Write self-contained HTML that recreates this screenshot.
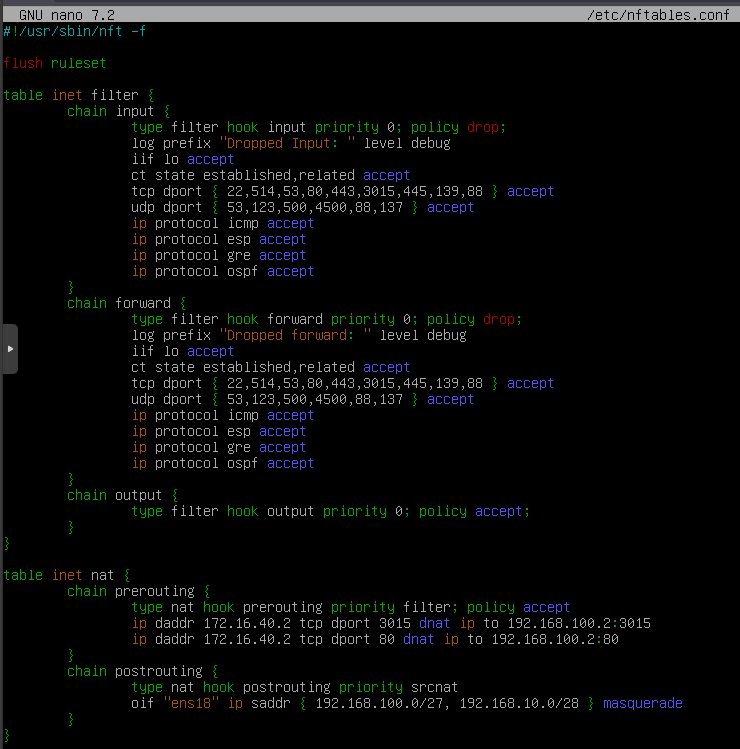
<!DOCTYPE html>
<html><head><meta charset="utf-8"><title>nano nftables.conf</title>
<style>
html,body{margin:0;padding:0;background:#000;width:740px;height:749px;overflow:hidden;font-family:"Liberation Mono",monospace;}
svg{display:block;}
</style></head><body>
<svg width="740" height="749" viewBox="0 0 740 749" shape-rendering="crispEdges">
<defs><path id="g0" d="M4 4h1v1h-1zM4 5h1v1h-1zM4 6h1v1h-1zM4 7h1v1h-1zM4 8h1v1h-1zM4 9h1v1h-1zM4 10h1v1h-1zM4 12h1v1h-1zM4 13h1v1h-1z"/><path id="g1" d="M2 2h1v1h-1zM6 2h1v1h-1zM2 3h1v1h-1zM6 3h1v1h-1zM2 4h1v1h-1zM6 4h1v1h-1zM2 5h1v1h-1zM6 5h1v1h-1z"/><path id="g2" d="M3 4h1v1h-1zM6 4h1v1h-1zM3 5h1v1h-1zM6 5h1v1h-1zM3 6h1v1h-1zM6 6h1v1h-1zM1 7h6v1h-6zM2 8h1v1h-1zM5 8h1v1h-1zM2 9h1v1h-1zM5 9h1v1h-1zM1 10h6v1h-6zM1 11h1v1h-1zM4 11h1v1h-1zM1 12h1v1h-1zM4 12h1v1h-1zM1 13h1v1h-1zM4 13h1v1h-1z"/><path id="g3" d="M3 12h2v1h-2zM4 13h1v1h-1zM4 14h1v1h-1zM3 15h1v1h-1z"/><path id="g4" d="M1 9h6v1h-6z"/><path id="g5" d="M3 12h2v1h-2zM3 13h2v1h-2z"/><path id="g6" d="M6 4h1v1h-1zM6 5h1v1h-1zM5 6h1v1h-1zM4 7h1v1h-1zM4 8h1v1h-1zM3 9h1v1h-1zM3 10h1v1h-1zM2 11h1v1h-1zM1 12h1v1h-1zM1 13h1v1h-1z"/><path id="g7" d="M3 4h2v1h-2zM2 5h1v1h-1zM5 5h1v1h-1zM1 6h1v1h-1zM6 6h1v1h-1zM1 7h1v1h-1zM5 7h2v1h-2zM1 8h1v1h-1zM4 8h1v1h-1zM6 8h1v1h-1zM1 9h1v1h-1zM3 9h1v1h-1zM6 9h1v1h-1zM1 10h2v1h-2zM6 10h1v1h-1zM1 11h1v1h-1zM6 11h1v1h-1zM2 12h1v1h-1zM5 12h1v1h-1zM3 13h2v1h-2z"/><path id="g8" d="M4 4h1v1h-1zM3 5h2v1h-2zM2 6h1v1h-1zM4 6h1v1h-1zM4 7h1v1h-1zM4 8h1v1h-1zM4 9h1v1h-1zM4 10h1v1h-1zM4 11h1v1h-1zM4 12h1v1h-1zM2 13h5v1h-5z"/><path id="g9" d="M2 4h4v1h-4zM1 5h1v1h-1zM6 5h1v1h-1zM1 6h1v1h-1zM6 6h1v1h-1zM6 7h1v1h-1zM4 8h2v1h-2zM3 9h1v1h-1zM2 10h1v1h-1zM1 11h1v1h-1zM1 12h1v1h-1zM1 13h6v1h-6z"/><path id="g10" d="M2 4h4v1h-4zM1 5h1v1h-1zM6 5h1v1h-1zM1 6h1v1h-1zM6 6h1v1h-1zM6 7h1v1h-1zM3 8h3v1h-3zM6 9h1v1h-1zM6 10h1v1h-1zM1 11h1v1h-1zM6 11h1v1h-1zM1 12h1v1h-1zM6 12h1v1h-1zM2 13h4v1h-4z"/><path id="g11" d="M5 4h1v1h-1zM4 5h2v1h-2zM3 6h1v1h-1zM5 6h1v1h-1zM2 7h1v1h-1zM5 7h1v1h-1zM1 8h1v1h-1zM5 8h1v1h-1zM1 9h1v1h-1zM5 9h1v1h-1zM1 10h6v1h-6zM5 11h1v1h-1zM5 12h1v1h-1zM5 13h1v1h-1z"/><path id="g12" d="M1 4h6v1h-6zM1 5h1v1h-1zM1 6h1v1h-1zM1 7h1v1h-1zM1 8h5v1h-5zM6 9h1v1h-1zM6 10h1v1h-1zM6 11h1v1h-1zM1 12h1v1h-1zM6 12h1v1h-1zM2 13h4v1h-4z"/><path id="g13" d="M3 4h3v1h-3zM2 5h1v1h-1zM1 6h1v1h-1zM1 7h1v1h-1zM1 8h5v1h-5zM1 9h1v1h-1zM6 9h1v1h-1zM1 10h1v1h-1zM6 10h1v1h-1zM1 11h1v1h-1zM6 11h1v1h-1zM1 12h1v1h-1zM6 12h1v1h-1zM2 13h4v1h-4z"/><path id="g14" d="M1 4h6v1h-6zM6 5h1v1h-1zM6 6h1v1h-1zM5 7h1v1h-1zM5 8h1v1h-1zM5 9h1v1h-1zM4 10h1v1h-1zM4 11h1v1h-1zM4 12h1v1h-1zM4 13h1v1h-1z"/><path id="g15" d="M2 4h4v1h-4zM1 5h1v1h-1zM6 5h1v1h-1zM1 6h1v1h-1zM6 6h1v1h-1zM1 7h1v1h-1zM6 7h1v1h-1zM2 8h4v1h-4zM1 9h1v1h-1zM6 9h1v1h-1zM1 10h1v1h-1zM6 10h1v1h-1zM1 11h1v1h-1zM6 11h1v1h-1zM1 12h1v1h-1zM6 12h1v1h-1zM2 13h4v1h-4z"/><path id="g16" d="M2 4h4v1h-4zM1 5h1v1h-1zM6 5h1v1h-1zM1 6h1v1h-1zM6 6h1v1h-1zM1 7h1v1h-1zM6 7h1v1h-1zM2 8h5v1h-5zM6 9h1v1h-1zM6 10h1v1h-1zM6 11h1v1h-1zM5 12h1v1h-1zM2 13h3v1h-3z"/><path id="g17" d="M3 6h2v1h-2zM3 7h2v1h-2zM3 11h2v1h-2zM3 12h2v1h-2z"/><path id="g18" d="M3 6h2v1h-2zM3 7h2v1h-2zM3 11h2v1h-2zM4 12h1v1h-1zM4 13h1v1h-1zM3 14h1v1h-1z"/><path id="g19" d="M1 4h4v1h-4zM1 5h1v1h-1zM5 5h1v1h-1zM1 6h1v1h-1zM6 6h1v1h-1zM1 7h1v1h-1zM6 7h1v1h-1zM1 8h1v1h-1zM6 8h1v1h-1zM1 9h1v1h-1zM6 9h1v1h-1zM1 10h1v1h-1zM6 10h1v1h-1zM1 11h1v1h-1zM6 11h1v1h-1zM1 12h1v1h-1zM5 12h1v1h-1zM1 13h4v1h-4z"/><path id="g20" d="M2 4h4v1h-4zM1 5h1v1h-1zM6 5h1v1h-1zM1 6h1v1h-1zM6 6h1v1h-1zM1 7h1v1h-1zM1 8h1v1h-1zM1 9h1v1h-1zM4 9h3v1h-3zM1 10h1v1h-1zM6 10h1v1h-1zM1 11h1v1h-1zM6 11h1v1h-1zM1 12h1v1h-1zM5 12h2v1h-2zM2 13h3v1h-3zM6 13h1v1h-1z"/><path id="g21" d="M2 4h5v1h-5zM4 5h1v1h-1zM4 6h1v1h-1zM4 7h1v1h-1zM4 8h1v1h-1zM4 9h1v1h-1zM4 10h1v1h-1zM4 11h1v1h-1zM4 12h1v1h-1zM2 13h5v1h-5z"/><path id="g22" d="M1 4h1v1h-1zM6 4h1v1h-1zM1 5h2v1h-2zM6 5h1v1h-1zM1 6h2v1h-2zM6 6h1v1h-1zM1 7h1v1h-1zM3 7h1v1h-1zM6 7h1v1h-1zM1 8h1v1h-1zM3 8h1v1h-1zM6 8h1v1h-1zM1 9h1v1h-1zM4 9h1v1h-1zM6 9h1v1h-1zM1 10h1v1h-1zM4 10h1v1h-1zM6 10h1v1h-1zM1 11h1v1h-1zM5 11h2v1h-2zM1 12h1v1h-1zM5 12h2v1h-2zM1 13h1v1h-1zM6 13h1v1h-1z"/><path id="g23" d="M1 4h1v1h-1zM6 4h1v1h-1zM1 5h1v1h-1zM6 5h1v1h-1zM1 6h1v1h-1zM6 6h1v1h-1zM1 7h1v1h-1zM6 7h1v1h-1zM1 8h1v1h-1zM6 8h1v1h-1zM1 9h1v1h-1zM6 9h1v1h-1zM1 10h1v1h-1zM6 10h1v1h-1zM1 11h1v1h-1zM6 11h1v1h-1zM1 12h1v1h-1zM6 12h1v1h-1zM2 13h4v1h-4z"/><path id="g24" d="M2 6h4v1h-4zM1 7h1v1h-1zM6 7h1v1h-1zM6 8h1v1h-1zM2 9h5v1h-5zM1 10h1v1h-1zM6 10h1v1h-1zM1 11h1v1h-1zM6 11h1v1h-1zM1 12h1v1h-1zM5 12h2v1h-2zM2 13h3v1h-3zM6 13h1v1h-1z"/><path id="g25" d="M1 3h1v1h-1zM1 4h1v1h-1zM1 5h1v1h-1zM1 6h1v1h-1zM3 6h3v1h-3zM1 7h2v1h-2zM6 7h1v1h-1zM1 8h1v1h-1zM6 8h1v1h-1zM1 9h1v1h-1zM6 9h1v1h-1zM1 10h1v1h-1zM6 10h1v1h-1zM1 11h1v1h-1zM6 11h1v1h-1zM1 12h2v1h-2zM6 12h1v1h-1zM1 13h1v1h-1zM3 13h3v1h-3z"/><path id="g26" d="M2 6h4v1h-4zM1 7h1v1h-1zM6 7h1v1h-1zM1 8h1v1h-1zM1 9h1v1h-1zM1 10h1v1h-1zM1 11h1v1h-1zM1 12h1v1h-1zM6 12h1v1h-1zM2 13h4v1h-4z"/><path id="g27" d="M6 3h1v1h-1zM6 4h1v1h-1zM6 5h1v1h-1zM2 6h3v1h-3zM6 6h1v1h-1zM1 7h1v1h-1zM5 7h2v1h-2zM1 8h1v1h-1zM6 8h1v1h-1zM1 9h1v1h-1zM6 9h1v1h-1zM1 10h1v1h-1zM6 10h1v1h-1zM1 11h1v1h-1zM6 11h1v1h-1zM1 12h1v1h-1zM5 12h2v1h-2zM2 13h3v1h-3zM6 13h1v1h-1z"/><path id="g28" d="M2 6h4v1h-4zM1 7h1v1h-1zM6 7h1v1h-1zM1 8h1v1h-1zM6 8h1v1h-1zM1 9h6v1h-6zM1 10h1v1h-1zM1 11h1v1h-1zM1 12h1v1h-1zM6 12h1v1h-1zM2 13h4v1h-4z"/><path id="g29" d="M4 3h2v1h-2zM3 4h1v1h-1zM3 5h1v1h-1zM3 6h1v1h-1zM1 7h5v1h-5zM3 8h1v1h-1zM3 9h1v1h-1zM3 10h1v1h-1zM3 11h1v1h-1zM3 12h1v1h-1zM3 13h1v1h-1z"/><path id="g30" d="M6 5h1v1h-1zM2 6h3v1h-3zM6 6h1v1h-1zM1 7h1v1h-1zM5 7h1v1h-1zM1 8h1v1h-1zM5 8h1v1h-1zM1 9h1v1h-1zM5 9h1v1h-1zM2 10h3v1h-3zM2 11h1v1h-1zM2 12h4v1h-4zM1 13h1v1h-1zM6 13h1v1h-1zM1 14h1v1h-1zM6 14h1v1h-1zM2 15h4v1h-4z"/><path id="g31" d="M1 3h1v1h-1zM1 4h1v1h-1zM1 5h1v1h-1zM1 6h1v1h-1zM3 6h3v1h-3zM1 7h2v1h-2zM6 7h1v1h-1zM1 8h1v1h-1zM6 8h1v1h-1zM1 9h1v1h-1zM6 9h1v1h-1zM1 10h1v1h-1zM6 10h1v1h-1zM1 11h1v1h-1zM6 11h1v1h-1zM1 12h1v1h-1zM6 12h1v1h-1zM1 13h1v1h-1zM6 13h1v1h-1z"/><path id="g32" d="M4 3h1v1h-1zM4 4h1v1h-1zM3 6h2v1h-2zM4 7h1v1h-1zM4 8h1v1h-1zM4 9h1v1h-1zM4 10h1v1h-1zM4 11h1v1h-1zM4 12h1v1h-1zM2 13h5v1h-5z"/><path id="g33" d="M1 4h1v1h-1zM1 5h1v1h-1zM1 6h1v1h-1zM5 6h1v1h-1zM1 7h1v1h-1zM4 7h1v1h-1zM1 8h1v1h-1zM3 8h1v1h-1zM1 9h2v1h-2zM1 10h1v1h-1zM3 10h1v1h-1zM1 11h1v1h-1zM4 11h1v1h-1zM1 12h1v1h-1zM5 12h1v1h-1zM1 13h1v1h-1zM6 13h1v1h-1z"/><path id="g34" d="M3 4h2v1h-2zM4 5h1v1h-1zM4 6h1v1h-1zM4 7h1v1h-1zM4 8h1v1h-1zM4 9h1v1h-1zM4 10h1v1h-1zM4 11h1v1h-1zM4 12h1v1h-1zM2 13h5v1h-5z"/><path id="g35" d="M1 6h3v1h-3zM5 6h2v1h-2zM1 7h1v1h-1zM4 7h1v1h-1zM7 7h1v1h-1zM1 8h1v1h-1zM4 8h1v1h-1zM7 8h1v1h-1zM1 9h1v1h-1zM4 9h1v1h-1zM7 9h1v1h-1zM1 10h1v1h-1zM4 10h1v1h-1zM7 10h1v1h-1zM1 11h1v1h-1zM4 11h1v1h-1zM7 11h1v1h-1zM1 12h1v1h-1zM4 12h1v1h-1zM7 12h1v1h-1zM1 13h1v1h-1zM4 13h1v1h-1zM7 13h1v1h-1z"/><path id="g36" d="M1 6h1v1h-1zM3 6h3v1h-3zM1 7h2v1h-2zM6 7h1v1h-1zM1 8h1v1h-1zM6 8h1v1h-1zM1 9h1v1h-1zM6 9h1v1h-1zM1 10h1v1h-1zM6 10h1v1h-1zM1 11h1v1h-1zM6 11h1v1h-1zM1 12h1v1h-1zM6 12h1v1h-1zM1 13h1v1h-1zM6 13h1v1h-1z"/><path id="g37" d="M2 6h4v1h-4zM1 7h1v1h-1zM6 7h1v1h-1zM1 8h1v1h-1zM6 8h1v1h-1zM1 9h1v1h-1zM6 9h1v1h-1zM1 10h1v1h-1zM6 10h1v1h-1zM1 11h1v1h-1zM6 11h1v1h-1zM1 12h1v1h-1zM6 12h1v1h-1zM2 13h4v1h-4z"/><path id="g38" d="M1 6h1v1h-1zM3 6h3v1h-3zM1 7h2v1h-2zM6 7h1v1h-1zM1 8h1v1h-1zM6 8h1v1h-1zM1 9h1v1h-1zM6 9h1v1h-1zM1 10h1v1h-1zM6 10h1v1h-1zM1 11h1v1h-1zM6 11h1v1h-1zM1 12h2v1h-2zM6 12h1v1h-1zM1 13h1v1h-1zM3 13h3v1h-3zM1 14h1v1h-1zM1 15h1v1h-1z"/><path id="g39" d="M2 6h3v1h-3zM6 6h1v1h-1zM1 7h1v1h-1zM5 7h2v1h-2zM1 8h1v1h-1zM6 8h1v1h-1zM1 9h1v1h-1zM6 9h1v1h-1zM1 10h1v1h-1zM6 10h1v1h-1zM1 11h1v1h-1zM6 11h1v1h-1zM1 12h1v1h-1zM5 12h2v1h-2zM2 13h3v1h-3zM6 13h1v1h-1zM6 14h1v1h-1zM6 15h1v1h-1z"/><path id="g40" d="M1 6h1v1h-1zM3 6h3v1h-3zM1 7h2v1h-2zM6 7h1v1h-1zM1 8h1v1h-1zM6 8h1v1h-1zM1 9h1v1h-1zM1 10h1v1h-1zM1 11h1v1h-1zM1 12h1v1h-1zM1 13h1v1h-1z"/><path id="g41" d="M2 6h4v1h-4zM1 7h1v1h-1zM6 7h1v1h-1zM1 8h1v1h-1zM2 9h2v1h-2zM4 10h2v1h-2zM6 11h1v1h-1zM1 12h1v1h-1zM6 12h1v1h-1zM2 13h4v1h-4z"/><path id="g42" d="M3 4h1v1h-1zM3 5h1v1h-1zM1 6h5v1h-5zM3 7h1v1h-1zM3 8h1v1h-1zM3 9h1v1h-1zM3 10h1v1h-1zM3 11h1v1h-1zM3 12h1v1h-1zM4 13h2v1h-2z"/><path id="g43" d="M1 6h1v1h-1zM6 6h1v1h-1zM1 7h1v1h-1zM6 7h1v1h-1zM1 8h1v1h-1zM6 8h1v1h-1zM1 9h1v1h-1zM6 9h1v1h-1zM1 10h1v1h-1zM6 10h1v1h-1zM1 11h1v1h-1zM6 11h1v1h-1zM1 12h1v1h-1zM5 12h2v1h-2zM2 13h3v1h-3zM6 13h1v1h-1z"/><path id="g44" d="M1 6h1v1h-1zM6 6h1v1h-1zM1 7h1v1h-1zM6 7h1v1h-1zM1 8h1v1h-1zM6 8h1v1h-1zM2 9h1v1h-1zM5 9h1v1h-1zM2 10h1v1h-1zM5 10h1v1h-1zM2 11h1v1h-1zM5 11h1v1h-1zM3 12h2v1h-2zM3 13h2v1h-2z"/><path id="g45" d="M1 6h1v1h-1zM7 6h1v1h-1zM1 7h1v1h-1zM4 7h1v1h-1zM7 7h1v1h-1zM1 8h1v1h-1zM4 8h1v1h-1zM7 8h1v1h-1zM1 9h1v1h-1zM4 9h1v1h-1zM7 9h1v1h-1zM1 10h1v1h-1zM4 10h1v1h-1zM7 10h1v1h-1zM1 11h1v1h-1zM4 11h1v1h-1zM7 11h1v1h-1zM1 12h1v1h-1zM4 12h1v1h-1zM7 12h1v1h-1zM2 13h2v1h-2zM5 13h2v1h-2z"/><path id="g46" d="M1 6h1v1h-1zM6 6h1v1h-1zM1 7h1v1h-1zM6 7h1v1h-1zM2 8h1v1h-1zM5 8h1v1h-1zM3 9h2v1h-2zM3 10h2v1h-2zM2 11h1v1h-1zM5 11h1v1h-1zM1 12h1v1h-1zM6 12h1v1h-1zM1 13h1v1h-1zM6 13h1v1h-1z"/><path id="g47" d="M1 6h1v1h-1zM6 6h1v1h-1zM1 7h1v1h-1zM6 7h1v1h-1zM1 8h1v1h-1zM6 8h1v1h-1zM1 9h1v1h-1zM6 9h1v1h-1zM1 10h1v1h-1zM6 10h1v1h-1zM2 11h1v1h-1zM5 11h2v1h-2zM3 12h2v1h-2zM6 12h1v1h-1zM6 13h1v1h-1zM6 14h1v1h-1zM2 15h4v1h-4z"/><path id="g48" d="M4 3h2v1h-2zM3 4h1v1h-1zM3 5h1v1h-1zM4 6h1v1h-1zM4 7h1v1h-1zM3 8h1v1h-1zM2 9h1v1h-1zM3 10h1v1h-1zM4 11h1v1h-1zM4 12h1v1h-1zM3 13h1v1h-1zM3 14h1v1h-1zM4 15h2v1h-2z"/><path id="g49" d="M2 3h2v1h-2zM4 4h1v1h-1zM4 5h1v1h-1zM3 6h1v1h-1zM3 7h1v1h-1zM4 8h1v1h-1zM5 9h1v1h-1zM4 10h1v1h-1zM3 11h1v1h-1zM3 12h1v1h-1zM4 13h1v1h-1zM4 14h1v1h-1zM2 15h2v1h-2z"/></defs>
<rect x="0" y="0" width="740" height="749" fill="#000"/>
<rect x="0" y="0" width="3" height="749" fill="#3a3a3a"/>
<rect x="2" y="0" width="1" height="749" fill="#303030"/>
<rect x="3" y="0" width="737" height="6" fill="#474752"/>
<path d="M54 0H740V2H57Q54 2 54 0Z" fill="#35353f" shape-rendering="geometricPrecision"/>
<rect x="3" y="5" width="737" height="1" fill="#45454f"/>
<rect x="3" y="6" width="737" height="16" fill="#aaaaaa"/>
<rect x="3" y="6" width="737" height="1" fill="#a0a0a2"/>
<g fill="#000000"><use href="#g20" x="19" y="6"/><use href="#g22" x="27" y="6"/><use href="#g23" x="35" y="6"/><use href="#g36" x="51" y="6"/><use href="#g24" x="59" y="6"/><use href="#g36" x="67" y="6"/><use href="#g37" x="75" y="6"/><use href="#g14" x="91" y="6"/><use href="#g5" x="99" y="6"/><use href="#g9" x="107" y="6"/><use href="#g6" x="587" y="6"/><use href="#g28" x="595" y="6"/><use href="#g42" x="603" y="6"/><use href="#g26" x="611" y="6"/><use href="#g6" x="619" y="6"/><use href="#g36" x="627" y="6"/><use href="#g29" x="635" y="6"/><use href="#g42" x="643" y="6"/><use href="#g24" x="651" y="6"/><use href="#g25" x="659" y="6"/><use href="#g34" x="667" y="6"/><use href="#g28" x="675" y="6"/><use href="#g41" x="683" y="6"/><use href="#g5" x="691" y="6"/><use href="#g26" x="699" y="6"/><use href="#g37" x="707" y="6"/><use href="#g36" x="715" y="6"/><use href="#g29" x="723" y="6"/></g>
<g fill="#00aaaa"><use href="#g2" x="3" y="22"/><use href="#g6" x="19" y="22"/><use href="#g43" x="27" y="22"/><use href="#g41" x="35" y="22"/><use href="#g40" x="43" y="22"/><use href="#g6" x="51" y="22"/><use href="#g41" x="59" y="22"/><use href="#g25" x="67" y="22"/><use href="#g32" x="75" y="22"/><use href="#g36" x="83" y="22"/><use href="#g6" x="91" y="22"/><use href="#g36" x="99" y="22"/><use href="#g29" x="107" y="22"/><use href="#g42" x="115" y="22"/><use href="#g4" x="131" y="22"/><use href="#g29" x="139" y="22"/></g>
<g fill="#00aa00"><use href="#g0" x="11" y="22"/><use href="#g40" x="51" y="54"/><use href="#g43" x="59" y="54"/><use href="#g34" x="67" y="54"/><use href="#g28" x="75" y="54"/><use href="#g41" x="83" y="54"/><use href="#g28" x="91" y="54"/><use href="#g42" x="99" y="54"/><use href="#g42" x="3" y="86"/><use href="#g24" x="11" y="86"/><use href="#g25" x="19" y="86"/><use href="#g34" x="27" y="86"/><use href="#g28" x="35" y="86"/><use href="#g48" x="147" y="86"/><use href="#g26" x="67" y="102"/><use href="#g31" x="75" y="102"/><use href="#g24" x="83" y="102"/><use href="#g32" x="91" y="102"/><use href="#g36" x="99" y="102"/><use href="#g48" x="163" y="102"/><use href="#g42" x="131" y="118"/><use href="#g47" x="139" y="118"/><use href="#g38" x="147" y="118"/><use href="#g28" x="155" y="118"/><use href="#g31" x="227" y="118"/><use href="#g37" x="235" y="118"/><use href="#g37" x="243" y="118"/><use href="#g33" x="251" y="118"/><use href="#g38" x="315" y="118"/><use href="#g40" x="323" y="118"/><use href="#g32" x="331" y="118"/><use href="#g37" x="339" y="118"/><use href="#g40" x="347" y="118"/><use href="#g32" x="355" y="118"/><use href="#g42" x="363" y="118"/><use href="#g47" x="371" y="118"/><use href="#g18" x="395" y="118"/><use href="#g38" x="411" y="118"/><use href="#g37" x="419" y="118"/><use href="#g34" x="427" y="118"/><use href="#g32" x="435" y="118"/><use href="#g26" x="443" y="118"/><use href="#g47" x="451" y="118"/><use href="#g18" x="499" y="118"/><use href="#g17" x="331" y="134"/><use href="#g48" x="211" y="182"/><use href="#g49" x="491" y="182"/><use href="#g48" x="211" y="198"/><use href="#g49" x="411" y="198"/><use href="#g49" x="67" y="278"/><use href="#g26" x="67" y="294"/><use href="#g31" x="75" y="294"/><use href="#g24" x="83" y="294"/><use href="#g32" x="91" y="294"/><use href="#g36" x="99" y="294"/><use href="#g48" x="179" y="294"/><use href="#g42" x="131" y="310"/><use href="#g47" x="139" y="310"/><use href="#g38" x="147" y="310"/><use href="#g28" x="155" y="310"/><use href="#g31" x="227" y="310"/><use href="#g37" x="235" y="310"/><use href="#g37" x="243" y="310"/><use href="#g33" x="251" y="310"/><use href="#g38" x="331" y="310"/><use href="#g40" x="339" y="310"/><use href="#g32" x="347" y="310"/><use href="#g37" x="355" y="310"/><use href="#g40" x="363" y="310"/><use href="#g32" x="371" y="310"/><use href="#g42" x="379" y="310"/><use href="#g47" x="387" y="310"/><use href="#g18" x="411" y="310"/><use href="#g38" x="427" y="310"/><use href="#g37" x="435" y="310"/><use href="#g34" x="443" y="310"/><use href="#g32" x="451" y="310"/><use href="#g26" x="459" y="310"/><use href="#g47" x="467" y="310"/><use href="#g18" x="515" y="310"/><use href="#g17" x="347" y="326"/><use href="#g48" x="211" y="374"/><use href="#g49" x="491" y="374"/><use href="#g48" x="211" y="390"/><use href="#g49" x="411" y="390"/><use href="#g49" x="67" y="470"/><use href="#g26" x="67" y="486"/><use href="#g31" x="75" y="486"/><use href="#g24" x="83" y="486"/><use href="#g32" x="91" y="486"/><use href="#g36" x="99" y="486"/><use href="#g48" x="171" y="486"/><use href="#g42" x="131" y="502"/><use href="#g47" x="139" y="502"/><use href="#g38" x="147" y="502"/><use href="#g28" x="155" y="502"/><use href="#g31" x="227" y="502"/><use href="#g37" x="235" y="502"/><use href="#g37" x="243" y="502"/><use href="#g33" x="251" y="502"/><use href="#g38" x="323" y="502"/><use href="#g40" x="331" y="502"/><use href="#g32" x="339" y="502"/><use href="#g37" x="347" y="502"/><use href="#g40" x="355" y="502"/><use href="#g32" x="363" y="502"/><use href="#g42" x="371" y="502"/><use href="#g47" x="379" y="502"/><use href="#g18" x="403" y="502"/><use href="#g38" x="419" y="502"/><use href="#g37" x="427" y="502"/><use href="#g34" x="435" y="502"/><use href="#g32" x="443" y="502"/><use href="#g26" x="451" y="502"/><use href="#g47" x="459" y="502"/><use href="#g18" x="523" y="502"/><use href="#g49" x="67" y="518"/><use href="#g49" x="3" y="534"/><use href="#g42" x="3" y="566"/><use href="#g24" x="11" y="566"/><use href="#g25" x="19" y="566"/><use href="#g34" x="27" y="566"/><use href="#g28" x="35" y="566"/><use href="#g48" x="123" y="566"/><use href="#g26" x="67" y="582"/><use href="#g31" x="75" y="582"/><use href="#g24" x="83" y="582"/><use href="#g32" x="91" y="582"/><use href="#g36" x="99" y="582"/><use href="#g48" x="203" y="582"/><use href="#g42" x="131" y="598"/><use href="#g47" x="139" y="598"/><use href="#g38" x="147" y="598"/><use href="#g28" x="155" y="598"/><use href="#g31" x="203" y="598"/><use href="#g37" x="211" y="598"/><use href="#g37" x="219" y="598"/><use href="#g33" x="227" y="598"/><use href="#g38" x="331" y="598"/><use href="#g40" x="339" y="598"/><use href="#g32" x="347" y="598"/><use href="#g37" x="355" y="598"/><use href="#g40" x="363" y="598"/><use href="#g32" x="371" y="598"/><use href="#g42" x="379" y="598"/><use href="#g47" x="387" y="598"/><use href="#g18" x="451" y="598"/><use href="#g38" x="467" y="598"/><use href="#g37" x="475" y="598"/><use href="#g34" x="483" y="598"/><use href="#g32" x="491" y="598"/><use href="#g26" x="499" y="598"/><use href="#g47" x="507" y="598"/><use href="#g17" x="611" y="614"/><use href="#g17" x="595" y="630"/><use href="#g49" x="67" y="646"/><use href="#g26" x="67" y="662"/><use href="#g31" x="75" y="662"/><use href="#g24" x="83" y="662"/><use href="#g32" x="91" y="662"/><use href="#g36" x="99" y="662"/><use href="#g48" x="211" y="662"/><use href="#g42" x="131" y="678"/><use href="#g47" x="139" y="678"/><use href="#g38" x="147" y="678"/><use href="#g28" x="155" y="678"/><use href="#g31" x="203" y="678"/><use href="#g37" x="211" y="678"/><use href="#g37" x="219" y="678"/><use href="#g33" x="227" y="678"/><use href="#g38" x="339" y="678"/><use href="#g40" x="347" y="678"/><use href="#g32" x="355" y="678"/><use href="#g37" x="363" y="678"/><use href="#g40" x="371" y="678"/><use href="#g32" x="379" y="678"/><use href="#g42" x="387" y="678"/><use href="#g47" x="395" y="678"/><use href="#g48" x="299" y="694"/><use href="#g49" x="587" y="694"/><use href="#g49" x="67" y="710"/><use href="#g49" x="3" y="726"/></g>
<g fill="#aa0000"><use href="#g29" x="3" y="54"/><use href="#g34" x="11" y="54"/><use href="#g43" x="19" y="54"/><use href="#g41" x="27" y="54"/><use href="#g31" x="35" y="54"/><use href="#g27" x="467" y="118"/><use href="#g40" x="475" y="118"/><use href="#g37" x="483" y="118"/><use href="#g38" x="491" y="118"/><use href="#g27" x="483" y="310"/><use href="#g40" x="491" y="310"/><use href="#g37" x="499" y="310"/><use href="#g38" x="507" y="310"/></g>
<g fill="#aa5500"><use href="#g32" x="51" y="86"/><use href="#g36" x="59" y="86"/><use href="#g28" x="67" y="86"/><use href="#g42" x="75" y="86"/><use href="#g1" x="219" y="134"/><use href="#g19" x="227" y="134"/><use href="#g40" x="235" y="134"/><use href="#g37" x="243" y="134"/><use href="#g38" x="251" y="134"/><use href="#g38" x="259" y="134"/><use href="#g28" x="267" y="134"/><use href="#g27" x="275" y="134"/><use href="#g21" x="291" y="134"/><use href="#g36" x="299" y="134"/><use href="#g38" x="307" y="134"/><use href="#g43" x="315" y="134"/><use href="#g42" x="323" y="134"/><use href="#g1" x="347" y="134"/><use href="#g32" x="131" y="214"/><use href="#g38" x="139" y="214"/><use href="#g32" x="131" y="230"/><use href="#g38" x="139" y="230"/><use href="#g32" x="131" y="246"/><use href="#g38" x="139" y="246"/><use href="#g32" x="131" y="262"/><use href="#g38" x="139" y="262"/><use href="#g1" x="219" y="326"/><use href="#g19" x="227" y="326"/><use href="#g40" x="235" y="326"/><use href="#g37" x="243" y="326"/><use href="#g38" x="251" y="326"/><use href="#g38" x="259" y="326"/><use href="#g28" x="267" y="326"/><use href="#g27" x="275" y="326"/><use href="#g29" x="291" y="326"/><use href="#g37" x="299" y="326"/><use href="#g40" x="307" y="326"/><use href="#g45" x="315" y="326"/><use href="#g24" x="323" y="326"/><use href="#g40" x="331" y="326"/><use href="#g27" x="339" y="326"/><use href="#g1" x="363" y="326"/><use href="#g32" x="131" y="406"/><use href="#g38" x="139" y="406"/><use href="#g32" x="131" y="422"/><use href="#g38" x="139" y="422"/><use href="#g32" x="131" y="438"/><use href="#g38" x="139" y="438"/><use href="#g32" x="131" y="454"/><use href="#g38" x="139" y="454"/><use href="#g32" x="51" y="566"/><use href="#g36" x="59" y="566"/><use href="#g28" x="67" y="566"/><use href="#g42" x="75" y="566"/><use href="#g32" x="131" y="614"/><use href="#g38" x="139" y="614"/><use href="#g32" x="459" y="614"/><use href="#g38" x="467" y="614"/><use href="#g32" x="131" y="630"/><use href="#g38" x="139" y="630"/><use href="#g32" x="443" y="630"/><use href="#g38" x="451" y="630"/><use href="#g1" x="163" y="694"/><use href="#g28" x="171" y="694"/><use href="#g36" x="179" y="694"/><use href="#g41" x="187" y="694"/><use href="#g8" x="195" y="694"/><use href="#g15" x="203" y="694"/><use href="#g1" x="211" y="694"/><use href="#g32" x="227" y="694"/><use href="#g38" x="235" y="694"/></g>
<g fill="#aaaaaa"><use href="#g29" x="91" y="86"/><use href="#g32" x="99" y="86"/><use href="#g34" x="107" y="86"/><use href="#g42" x="115" y="86"/><use href="#g28" x="123" y="86"/><use href="#g40" x="131" y="86"/><use href="#g32" x="115" y="102"/><use href="#g36" x="123" y="102"/><use href="#g38" x="131" y="102"/><use href="#g43" x="139" y="102"/><use href="#g42" x="147" y="102"/><use href="#g29" x="171" y="118"/><use href="#g32" x="179" y="118"/><use href="#g34" x="187" y="118"/><use href="#g42" x="195" y="118"/><use href="#g28" x="203" y="118"/><use href="#g40" x="211" y="118"/><use href="#g32" x="267" y="118"/><use href="#g36" x="275" y="118"/><use href="#g38" x="283" y="118"/><use href="#g43" x="291" y="118"/><use href="#g42" x="299" y="118"/><use href="#g7" x="387" y="118"/><use href="#g34" x="131" y="134"/><use href="#g37" x="139" y="134"/><use href="#g30" x="147" y="134"/><use href="#g38" x="163" y="134"/><use href="#g40" x="171" y="134"/><use href="#g28" x="179" y="134"/><use href="#g29" x="187" y="134"/><use href="#g32" x="195" y="134"/><use href="#g46" x="203" y="134"/><use href="#g34" x="363" y="134"/><use href="#g28" x="371" y="134"/><use href="#g44" x="379" y="134"/><use href="#g28" x="387" y="134"/><use href="#g34" x="395" y="134"/><use href="#g27" x="411" y="134"/><use href="#g28" x="419" y="134"/><use href="#g25" x="427" y="134"/><use href="#g43" x="435" y="134"/><use href="#g30" x="443" y="134"/><use href="#g32" x="131" y="150"/><use href="#g32" x="139" y="150"/><use href="#g29" x="147" y="150"/><use href="#g34" x="163" y="150"/><use href="#g37" x="171" y="150"/><use href="#g26" x="131" y="166"/><use href="#g42" x="139" y="166"/><use href="#g41" x="155" y="166"/><use href="#g42" x="163" y="166"/><use href="#g24" x="171" y="166"/><use href="#g42" x="179" y="166"/><use href="#g28" x="187" y="166"/><use href="#g28" x="203" y="166"/><use href="#g41" x="211" y="166"/><use href="#g42" x="219" y="166"/><use href="#g24" x="227" y="166"/><use href="#g25" x="235" y="166"/><use href="#g34" x="243" y="166"/><use href="#g32" x="251" y="166"/><use href="#g41" x="259" y="166"/><use href="#g31" x="267" y="166"/><use href="#g28" x="275" y="166"/><use href="#g27" x="283" y="166"/><use href="#g3" x="291" y="166"/><use href="#g40" x="299" y="166"/><use href="#g28" x="307" y="166"/><use href="#g34" x="315" y="166"/><use href="#g24" x="323" y="166"/><use href="#g42" x="331" y="166"/><use href="#g28" x="339" y="166"/><use href="#g27" x="347" y="166"/><use href="#g42" x="131" y="182"/><use href="#g26" x="139" y="182"/><use href="#g38" x="147" y="182"/><use href="#g27" x="163" y="182"/><use href="#g38" x="171" y="182"/><use href="#g37" x="179" y="182"/><use href="#g40" x="187" y="182"/><use href="#g42" x="195" y="182"/><use href="#g9" x="227" y="182"/><use href="#g9" x="235" y="182"/><use href="#g3" x="243" y="182"/><use href="#g12" x="251" y="182"/><use href="#g8" x="259" y="182"/><use href="#g11" x="267" y="182"/><use href="#g3" x="275" y="182"/><use href="#g12" x="283" y="182"/><use href="#g10" x="291" y="182"/><use href="#g3" x="299" y="182"/><use href="#g15" x="307" y="182"/><use href="#g7" x="315" y="182"/><use href="#g3" x="323" y="182"/><use href="#g11" x="331" y="182"/><use href="#g11" x="339" y="182"/><use href="#g10" x="347" y="182"/><use href="#g3" x="355" y="182"/><use href="#g10" x="363" y="182"/><use href="#g7" x="371" y="182"/><use href="#g8" x="379" y="182"/><use href="#g12" x="387" y="182"/><use href="#g3" x="395" y="182"/><use href="#g11" x="403" y="182"/><use href="#g11" x="411" y="182"/><use href="#g12" x="419" y="182"/><use href="#g3" x="427" y="182"/><use href="#g8" x="435" y="182"/><use href="#g10" x="443" y="182"/><use href="#g16" x="451" y="182"/><use href="#g3" x="459" y="182"/><use href="#g15" x="467" y="182"/><use href="#g15" x="475" y="182"/><use href="#g43" x="131" y="198"/><use href="#g27" x="139" y="198"/><use href="#g38" x="147" y="198"/><use href="#g27" x="163" y="198"/><use href="#g38" x="171" y="198"/><use href="#g37" x="179" y="198"/><use href="#g40" x="187" y="198"/><use href="#g42" x="195" y="198"/><use href="#g12" x="227" y="198"/><use href="#g10" x="235" y="198"/><use href="#g3" x="243" y="198"/><use href="#g8" x="251" y="198"/><use href="#g9" x="259" y="198"/><use href="#g10" x="267" y="198"/><use href="#g3" x="275" y="198"/><use href="#g12" x="283" y="198"/><use href="#g7" x="291" y="198"/><use href="#g7" x="299" y="198"/><use href="#g3" x="307" y="198"/><use href="#g11" x="315" y="198"/><use href="#g12" x="323" y="198"/><use href="#g7" x="331" y="198"/><use href="#g7" x="339" y="198"/><use href="#g3" x="347" y="198"/><use href="#g15" x="355" y="198"/><use href="#g15" x="363" y="198"/><use href="#g3" x="371" y="198"/><use href="#g8" x="379" y="198"/><use href="#g10" x="387" y="198"/><use href="#g14" x="395" y="198"/><use href="#g38" x="155" y="214"/><use href="#g40" x="163" y="214"/><use href="#g37" x="171" y="214"/><use href="#g42" x="179" y="214"/><use href="#g37" x="187" y="214"/><use href="#g26" x="195" y="214"/><use href="#g37" x="203" y="214"/><use href="#g34" x="211" y="214"/><use href="#g32" x="227" y="214"/><use href="#g26" x="235" y="214"/><use href="#g35" x="243" y="214"/><use href="#g38" x="251" y="214"/><use href="#g38" x="155" y="230"/><use href="#g40" x="163" y="230"/><use href="#g37" x="171" y="230"/><use href="#g42" x="179" y="230"/><use href="#g37" x="187" y="230"/><use href="#g26" x="195" y="230"/><use href="#g37" x="203" y="230"/><use href="#g34" x="211" y="230"/><use href="#g28" x="227" y="230"/><use href="#g41" x="235" y="230"/><use href="#g38" x="243" y="230"/><use href="#g38" x="155" y="246"/><use href="#g40" x="163" y="246"/><use href="#g37" x="171" y="246"/><use href="#g42" x="179" y="246"/><use href="#g37" x="187" y="246"/><use href="#g26" x="195" y="246"/><use href="#g37" x="203" y="246"/><use href="#g34" x="211" y="246"/><use href="#g30" x="227" y="246"/><use href="#g40" x="235" y="246"/><use href="#g28" x="243" y="246"/><use href="#g38" x="155" y="262"/><use href="#g40" x="163" y="262"/><use href="#g37" x="171" y="262"/><use href="#g42" x="179" y="262"/><use href="#g37" x="187" y="262"/><use href="#g26" x="195" y="262"/><use href="#g37" x="203" y="262"/><use href="#g34" x="211" y="262"/><use href="#g37" x="227" y="262"/><use href="#g41" x="235" y="262"/><use href="#g38" x="243" y="262"/><use href="#g29" x="251" y="262"/><use href="#g29" x="115" y="294"/><use href="#g37" x="123" y="294"/><use href="#g40" x="131" y="294"/><use href="#g45" x="139" y="294"/><use href="#g24" x="147" y="294"/><use href="#g40" x="155" y="294"/><use href="#g27" x="163" y="294"/><use href="#g29" x="171" y="310"/><use href="#g32" x="179" y="310"/><use href="#g34" x="187" y="310"/><use href="#g42" x="195" y="310"/><use href="#g28" x="203" y="310"/><use href="#g40" x="211" y="310"/><use href="#g29" x="267" y="310"/><use href="#g37" x="275" y="310"/><use href="#g40" x="283" y="310"/><use href="#g45" x="291" y="310"/><use href="#g24" x="299" y="310"/><use href="#g40" x="307" y="310"/><use href="#g27" x="315" y="310"/><use href="#g7" x="403" y="310"/><use href="#g34" x="131" y="326"/><use href="#g37" x="139" y="326"/><use href="#g30" x="147" y="326"/><use href="#g38" x="163" y="326"/><use href="#g40" x="171" y="326"/><use href="#g28" x="179" y="326"/><use href="#g29" x="187" y="326"/><use href="#g32" x="195" y="326"/><use href="#g46" x="203" y="326"/><use href="#g34" x="379" y="326"/><use href="#g28" x="387" y="326"/><use href="#g44" x="395" y="326"/><use href="#g28" x="403" y="326"/><use href="#g34" x="411" y="326"/><use href="#g27" x="427" y="326"/><use href="#g28" x="435" y="326"/><use href="#g25" x="443" y="326"/><use href="#g43" x="451" y="326"/><use href="#g30" x="459" y="326"/><use href="#g32" x="131" y="342"/><use href="#g32" x="139" y="342"/><use href="#g29" x="147" y="342"/><use href="#g34" x="163" y="342"/><use href="#g37" x="171" y="342"/><use href="#g26" x="131" y="358"/><use href="#g42" x="139" y="358"/><use href="#g41" x="155" y="358"/><use href="#g42" x="163" y="358"/><use href="#g24" x="171" y="358"/><use href="#g42" x="179" y="358"/><use href="#g28" x="187" y="358"/><use href="#g28" x="203" y="358"/><use href="#g41" x="211" y="358"/><use href="#g42" x="219" y="358"/><use href="#g24" x="227" y="358"/><use href="#g25" x="235" y="358"/><use href="#g34" x="243" y="358"/><use href="#g32" x="251" y="358"/><use href="#g41" x="259" y="358"/><use href="#g31" x="267" y="358"/><use href="#g28" x="275" y="358"/><use href="#g27" x="283" y="358"/><use href="#g3" x="291" y="358"/><use href="#g40" x="299" y="358"/><use href="#g28" x="307" y="358"/><use href="#g34" x="315" y="358"/><use href="#g24" x="323" y="358"/><use href="#g42" x="331" y="358"/><use href="#g28" x="339" y="358"/><use href="#g27" x="347" y="358"/><use href="#g42" x="131" y="374"/><use href="#g26" x="139" y="374"/><use href="#g38" x="147" y="374"/><use href="#g27" x="163" y="374"/><use href="#g38" x="171" y="374"/><use href="#g37" x="179" y="374"/><use href="#g40" x="187" y="374"/><use href="#g42" x="195" y="374"/><use href="#g9" x="227" y="374"/><use href="#g9" x="235" y="374"/><use href="#g3" x="243" y="374"/><use href="#g12" x="251" y="374"/><use href="#g8" x="259" y="374"/><use href="#g11" x="267" y="374"/><use href="#g3" x="275" y="374"/><use href="#g12" x="283" y="374"/><use href="#g10" x="291" y="374"/><use href="#g3" x="299" y="374"/><use href="#g15" x="307" y="374"/><use href="#g7" x="315" y="374"/><use href="#g3" x="323" y="374"/><use href="#g11" x="331" y="374"/><use href="#g11" x="339" y="374"/><use href="#g10" x="347" y="374"/><use href="#g3" x="355" y="374"/><use href="#g10" x="363" y="374"/><use href="#g7" x="371" y="374"/><use href="#g8" x="379" y="374"/><use href="#g12" x="387" y="374"/><use href="#g3" x="395" y="374"/><use href="#g11" x="403" y="374"/><use href="#g11" x="411" y="374"/><use href="#g12" x="419" y="374"/><use href="#g3" x="427" y="374"/><use href="#g8" x="435" y="374"/><use href="#g10" x="443" y="374"/><use href="#g16" x="451" y="374"/><use href="#g3" x="459" y="374"/><use href="#g15" x="467" y="374"/><use href="#g15" x="475" y="374"/><use href="#g43" x="131" y="390"/><use href="#g27" x="139" y="390"/><use href="#g38" x="147" y="390"/><use href="#g27" x="163" y="390"/><use href="#g38" x="171" y="390"/><use href="#g37" x="179" y="390"/><use href="#g40" x="187" y="390"/><use href="#g42" x="195" y="390"/><use href="#g12" x="227" y="390"/><use href="#g10" x="235" y="390"/><use href="#g3" x="243" y="390"/><use href="#g8" x="251" y="390"/><use href="#g9" x="259" y="390"/><use href="#g10" x="267" y="390"/><use href="#g3" x="275" y="390"/><use href="#g12" x="283" y="390"/><use href="#g7" x="291" y="390"/><use href="#g7" x="299" y="390"/><use href="#g3" x="307" y="390"/><use href="#g11" x="315" y="390"/><use href="#g12" x="323" y="390"/><use href="#g7" x="331" y="390"/><use href="#g7" x="339" y="390"/><use href="#g3" x="347" y="390"/><use href="#g15" x="355" y="390"/><use href="#g15" x="363" y="390"/><use href="#g3" x="371" y="390"/><use href="#g8" x="379" y="390"/><use href="#g10" x="387" y="390"/><use href="#g14" x="395" y="390"/><use href="#g38" x="155" y="406"/><use href="#g40" x="163" y="406"/><use href="#g37" x="171" y="406"/><use href="#g42" x="179" y="406"/><use href="#g37" x="187" y="406"/><use href="#g26" x="195" y="406"/><use href="#g37" x="203" y="406"/><use href="#g34" x="211" y="406"/><use href="#g32" x="227" y="406"/><use href="#g26" x="235" y="406"/><use href="#g35" x="243" y="406"/><use href="#g38" x="251" y="406"/><use href="#g38" x="155" y="422"/><use href="#g40" x="163" y="422"/><use href="#g37" x="171" y="422"/><use href="#g42" x="179" y="422"/><use href="#g37" x="187" y="422"/><use href="#g26" x="195" y="422"/><use href="#g37" x="203" y="422"/><use href="#g34" x="211" y="422"/><use href="#g28" x="227" y="422"/><use href="#g41" x="235" y="422"/><use href="#g38" x="243" y="422"/><use href="#g38" x="155" y="438"/><use href="#g40" x="163" y="438"/><use href="#g37" x="171" y="438"/><use href="#g42" x="179" y="438"/><use href="#g37" x="187" y="438"/><use href="#g26" x="195" y="438"/><use href="#g37" x="203" y="438"/><use href="#g34" x="211" y="438"/><use href="#g30" x="227" y="438"/><use href="#g40" x="235" y="438"/><use href="#g28" x="243" y="438"/><use href="#g38" x="155" y="454"/><use href="#g40" x="163" y="454"/><use href="#g37" x="171" y="454"/><use href="#g42" x="179" y="454"/><use href="#g37" x="187" y="454"/><use href="#g26" x="195" y="454"/><use href="#g37" x="203" y="454"/><use href="#g34" x="211" y="454"/><use href="#g37" x="227" y="454"/><use href="#g41" x="235" y="454"/><use href="#g38" x="243" y="454"/><use href="#g29" x="251" y="454"/><use href="#g37" x="115" y="486"/><use href="#g43" x="123" y="486"/><use href="#g42" x="131" y="486"/><use href="#g38" x="139" y="486"/><use href="#g43" x="147" y="486"/><use href="#g42" x="155" y="486"/><use href="#g29" x="171" y="502"/><use href="#g32" x="179" y="502"/><use href="#g34" x="187" y="502"/><use href="#g42" x="195" y="502"/><use href="#g28" x="203" y="502"/><use href="#g40" x="211" y="502"/><use href="#g37" x="267" y="502"/><use href="#g43" x="275" y="502"/><use href="#g42" x="283" y="502"/><use href="#g38" x="291" y="502"/><use href="#g43" x="299" y="502"/><use href="#g42" x="307" y="502"/><use href="#g7" x="395" y="502"/><use href="#g36" x="91" y="566"/><use href="#g24" x="99" y="566"/><use href="#g42" x="107" y="566"/><use href="#g38" x="115" y="582"/><use href="#g40" x="123" y="582"/><use href="#g28" x="131" y="582"/><use href="#g40" x="139" y="582"/><use href="#g37" x="147" y="582"/><use href="#g43" x="155" y="582"/><use href="#g42" x="163" y="582"/><use href="#g32" x="171" y="582"/><use href="#g36" x="179" y="582"/><use href="#g30" x="187" y="582"/><use href="#g36" x="171" y="598"/><use href="#g24" x="179" y="598"/><use href="#g42" x="187" y="598"/><use href="#g38" x="243" y="598"/><use href="#g40" x="251" y="598"/><use href="#g28" x="259" y="598"/><use href="#g40" x="267" y="598"/><use href="#g37" x="275" y="598"/><use href="#g43" x="283" y="598"/><use href="#g42" x="291" y="598"/><use href="#g32" x="299" y="598"/><use href="#g36" x="307" y="598"/><use href="#g30" x="315" y="598"/><use href="#g29" x="403" y="598"/><use href="#g32" x="411" y="598"/><use href="#g34" x="419" y="598"/><use href="#g42" x="427" y="598"/><use href="#g28" x="435" y="598"/><use href="#g40" x="443" y="598"/><use href="#g27" x="155" y="614"/><use href="#g24" x="163" y="614"/><use href="#g27" x="171" y="614"/><use href="#g27" x="179" y="614"/><use href="#g40" x="187" y="614"/><use href="#g8" x="203" y="614"/><use href="#g14" x="211" y="614"/><use href="#g9" x="219" y="614"/><use href="#g5" x="227" y="614"/><use href="#g8" x="235" y="614"/><use href="#g13" x="243" y="614"/><use href="#g5" x="251" y="614"/><use href="#g11" x="259" y="614"/><use href="#g7" x="267" y="614"/><use href="#g5" x="275" y="614"/><use href="#g9" x="283" y="614"/><use href="#g42" x="299" y="614"/><use href="#g26" x="307" y="614"/><use href="#g38" x="315" y="614"/><use href="#g27" x="331" y="614"/><use href="#g38" x="339" y="614"/><use href="#g37" x="347" y="614"/><use href="#g40" x="355" y="614"/><use href="#g42" x="363" y="614"/><use href="#g10" x="379" y="614"/><use href="#g7" x="387" y="614"/><use href="#g8" x="395" y="614"/><use href="#g12" x="403" y="614"/><use href="#g42" x="483" y="614"/><use href="#g37" x="491" y="614"/><use href="#g8" x="507" y="614"/><use href="#g16" x="515" y="614"/><use href="#g9" x="523" y="614"/><use href="#g5" x="531" y="614"/><use href="#g8" x="539" y="614"/><use href="#g13" x="547" y="614"/><use href="#g15" x="555" y="614"/><use href="#g5" x="563" y="614"/><use href="#g8" x="571" y="614"/><use href="#g7" x="579" y="614"/><use href="#g7" x="587" y="614"/><use href="#g5" x="595" y="614"/><use href="#g9" x="603" y="614"/><use href="#g10" x="619" y="614"/><use href="#g7" x="627" y="614"/><use href="#g8" x="635" y="614"/><use href="#g12" x="643" y="614"/><use href="#g27" x="155" y="630"/><use href="#g24" x="163" y="630"/><use href="#g27" x="171" y="630"/><use href="#g27" x="179" y="630"/><use href="#g40" x="187" y="630"/><use href="#g8" x="203" y="630"/><use href="#g14" x="211" y="630"/><use href="#g9" x="219" y="630"/><use href="#g5" x="227" y="630"/><use href="#g8" x="235" y="630"/><use href="#g13" x="243" y="630"/><use href="#g5" x="251" y="630"/><use href="#g11" x="259" y="630"/><use href="#g7" x="267" y="630"/><use href="#g5" x="275" y="630"/><use href="#g9" x="283" y="630"/><use href="#g42" x="299" y="630"/><use href="#g26" x="307" y="630"/><use href="#g38" x="315" y="630"/><use href="#g27" x="331" y="630"/><use href="#g38" x="339" y="630"/><use href="#g37" x="347" y="630"/><use href="#g40" x="355" y="630"/><use href="#g42" x="363" y="630"/><use href="#g15" x="379" y="630"/><use href="#g7" x="387" y="630"/><use href="#g42" x="467" y="630"/><use href="#g37" x="475" y="630"/><use href="#g8" x="491" y="630"/><use href="#g16" x="499" y="630"/><use href="#g9" x="507" y="630"/><use href="#g5" x="515" y="630"/><use href="#g8" x="523" y="630"/><use href="#g13" x="531" y="630"/><use href="#g15" x="539" y="630"/><use href="#g5" x="547" y="630"/><use href="#g8" x="555" y="630"/><use href="#g7" x="563" y="630"/><use href="#g7" x="571" y="630"/><use href="#g5" x="579" y="630"/><use href="#g9" x="587" y="630"/><use href="#g15" x="603" y="630"/><use href="#g7" x="611" y="630"/><use href="#g38" x="115" y="662"/><use href="#g37" x="123" y="662"/><use href="#g41" x="131" y="662"/><use href="#g42" x="139" y="662"/><use href="#g40" x="147" y="662"/><use href="#g37" x="155" y="662"/><use href="#g43" x="163" y="662"/><use href="#g42" x="171" y="662"/><use href="#g32" x="179" y="662"/><use href="#g36" x="187" y="662"/><use href="#g30" x="195" y="662"/><use href="#g36" x="171" y="678"/><use href="#g24" x="179" y="678"/><use href="#g42" x="187" y="678"/><use href="#g38" x="243" y="678"/><use href="#g37" x="251" y="678"/><use href="#g41" x="259" y="678"/><use href="#g42" x="267" y="678"/><use href="#g40" x="275" y="678"/><use href="#g37" x="283" y="678"/><use href="#g43" x="291" y="678"/><use href="#g42" x="299" y="678"/><use href="#g32" x="307" y="678"/><use href="#g36" x="315" y="678"/><use href="#g30" x="323" y="678"/><use href="#g41" x="411" y="678"/><use href="#g40" x="419" y="678"/><use href="#g26" x="427" y="678"/><use href="#g36" x="435" y="678"/><use href="#g24" x="443" y="678"/><use href="#g42" x="451" y="678"/><use href="#g37" x="131" y="694"/><use href="#g32" x="139" y="694"/><use href="#g29" x="147" y="694"/><use href="#g41" x="251" y="694"/><use href="#g24" x="259" y="694"/><use href="#g27" x="267" y="694"/><use href="#g27" x="275" y="694"/><use href="#g40" x="283" y="694"/><use href="#g8" x="315" y="694"/><use href="#g16" x="323" y="694"/><use href="#g9" x="331" y="694"/><use href="#g5" x="339" y="694"/><use href="#g8" x="347" y="694"/><use href="#g13" x="355" y="694"/><use href="#g15" x="363" y="694"/><use href="#g5" x="371" y="694"/><use href="#g8" x="379" y="694"/><use href="#g7" x="387" y="694"/><use href="#g7" x="395" y="694"/><use href="#g5" x="403" y="694"/><use href="#g7" x="411" y="694"/><use href="#g6" x="419" y="694"/><use href="#g9" x="427" y="694"/><use href="#g14" x="435" y="694"/><use href="#g3" x="443" y="694"/><use href="#g8" x="459" y="694"/><use href="#g16" x="467" y="694"/><use href="#g9" x="475" y="694"/><use href="#g5" x="483" y="694"/><use href="#g8" x="491" y="694"/><use href="#g13" x="499" y="694"/><use href="#g15" x="507" y="694"/><use href="#g5" x="515" y="694"/><use href="#g8" x="523" y="694"/><use href="#g7" x="531" y="694"/><use href="#g5" x="539" y="694"/><use href="#g7" x="547" y="694"/><use href="#g6" x="555" y="694"/><use href="#g9" x="563" y="694"/><use href="#g15" x="571" y="694"/></g>
<g fill="#5555ff"><use href="#g24" x="187" y="150"/><use href="#g26" x="195" y="150"/><use href="#g26" x="203" y="150"/><use href="#g28" x="211" y="150"/><use href="#g38" x="219" y="150"/><use href="#g42" x="227" y="150"/><use href="#g24" x="363" y="166"/><use href="#g26" x="371" y="166"/><use href="#g26" x="379" y="166"/><use href="#g28" x="387" y="166"/><use href="#g38" x="395" y="166"/><use href="#g42" x="403" y="166"/><use href="#g24" x="507" y="182"/><use href="#g26" x="515" y="182"/><use href="#g26" x="523" y="182"/><use href="#g28" x="531" y="182"/><use href="#g38" x="539" y="182"/><use href="#g42" x="547" y="182"/><use href="#g24" x="427" y="198"/><use href="#g26" x="435" y="198"/><use href="#g26" x="443" y="198"/><use href="#g28" x="451" y="198"/><use href="#g38" x="459" y="198"/><use href="#g42" x="467" y="198"/><use href="#g24" x="267" y="214"/><use href="#g26" x="275" y="214"/><use href="#g26" x="283" y="214"/><use href="#g28" x="291" y="214"/><use href="#g38" x="299" y="214"/><use href="#g42" x="307" y="214"/><use href="#g24" x="259" y="230"/><use href="#g26" x="267" y="230"/><use href="#g26" x="275" y="230"/><use href="#g28" x="283" y="230"/><use href="#g38" x="291" y="230"/><use href="#g42" x="299" y="230"/><use href="#g24" x="259" y="246"/><use href="#g26" x="267" y="246"/><use href="#g26" x="275" y="246"/><use href="#g28" x="283" y="246"/><use href="#g38" x="291" y="246"/><use href="#g42" x="299" y="246"/><use href="#g24" x="267" y="262"/><use href="#g26" x="275" y="262"/><use href="#g26" x="283" y="262"/><use href="#g28" x="291" y="262"/><use href="#g38" x="299" y="262"/><use href="#g42" x="307" y="262"/><use href="#g24" x="187" y="342"/><use href="#g26" x="195" y="342"/><use href="#g26" x="203" y="342"/><use href="#g28" x="211" y="342"/><use href="#g38" x="219" y="342"/><use href="#g42" x="227" y="342"/><use href="#g24" x="363" y="358"/><use href="#g26" x="371" y="358"/><use href="#g26" x="379" y="358"/><use href="#g28" x="387" y="358"/><use href="#g38" x="395" y="358"/><use href="#g42" x="403" y="358"/><use href="#g24" x="507" y="374"/><use href="#g26" x="515" y="374"/><use href="#g26" x="523" y="374"/><use href="#g28" x="531" y="374"/><use href="#g38" x="539" y="374"/><use href="#g42" x="547" y="374"/><use href="#g24" x="427" y="390"/><use href="#g26" x="435" y="390"/><use href="#g26" x="443" y="390"/><use href="#g28" x="451" y="390"/><use href="#g38" x="459" y="390"/><use href="#g42" x="467" y="390"/><use href="#g24" x="267" y="406"/><use href="#g26" x="275" y="406"/><use href="#g26" x="283" y="406"/><use href="#g28" x="291" y="406"/><use href="#g38" x="299" y="406"/><use href="#g42" x="307" y="406"/><use href="#g24" x="259" y="422"/><use href="#g26" x="267" y="422"/><use href="#g26" x="275" y="422"/><use href="#g28" x="283" y="422"/><use href="#g38" x="291" y="422"/><use href="#g42" x="299" y="422"/><use href="#g24" x="259" y="438"/><use href="#g26" x="267" y="438"/><use href="#g26" x="275" y="438"/><use href="#g28" x="283" y="438"/><use href="#g38" x="291" y="438"/><use href="#g42" x="299" y="438"/><use href="#g24" x="267" y="454"/><use href="#g26" x="275" y="454"/><use href="#g26" x="283" y="454"/><use href="#g28" x="291" y="454"/><use href="#g38" x="299" y="454"/><use href="#g42" x="307" y="454"/><use href="#g24" x="475" y="502"/><use href="#g26" x="483" y="502"/><use href="#g26" x="491" y="502"/><use href="#g28" x="499" y="502"/><use href="#g38" x="507" y="502"/><use href="#g42" x="515" y="502"/><use href="#g24" x="523" y="598"/><use href="#g26" x="531" y="598"/><use href="#g26" x="539" y="598"/><use href="#g28" x="547" y="598"/><use href="#g38" x="555" y="598"/><use href="#g42" x="563" y="598"/><use href="#g27" x="419" y="614"/><use href="#g36" x="427" y="614"/><use href="#g24" x="435" y="614"/><use href="#g42" x="443" y="614"/><use href="#g27" x="403" y="630"/><use href="#g36" x="411" y="630"/><use href="#g24" x="419" y="630"/><use href="#g42" x="427" y="630"/><use href="#g35" x="603" y="694"/><use href="#g24" x="611" y="694"/><use href="#g41" x="619" y="694"/><use href="#g39" x="627" y="694"/><use href="#g43" x="635" y="694"/><use href="#g28" x="643" y="694"/><use href="#g40" x="651" y="694"/><use href="#g24" x="659" y="694"/><use href="#g27" x="667" y="694"/><use href="#g28" x="675" y="694"/></g>
<path d="M3 324H13A5 5 0 0 1 18 329V369A5 5 0 0 1 13 374H3Z" fill="#3c3c3c" shape-rendering="geometricPrecision"/>
<path d="M8.6 346.4L12.6 348.9L8.6 351.4Z" fill="#d8d8d8" stroke="#d8d8d8" stroke-width="1.3" stroke-linejoin="round" shape-rendering="geometricPrecision"/>
</svg>
</body></html>
